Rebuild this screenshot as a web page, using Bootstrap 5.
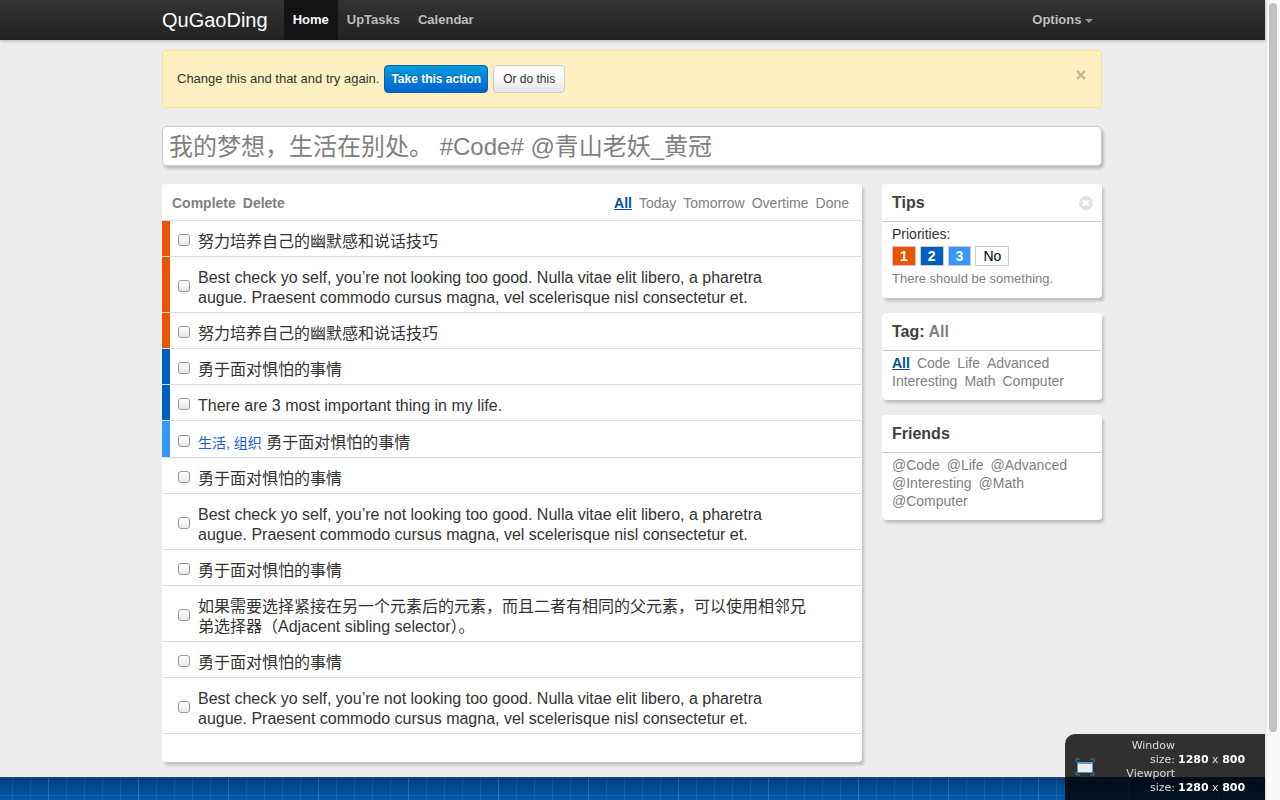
<!DOCTYPE html>
<html lang="zh-CN">
<head>
<meta charset="utf-8">
<meta name="viewport" content="width=device-width, initial-scale=1">
<title>QuGaoDing</title>
<link href="https://cdn.jsdelivr.net/npm/bootstrap@5.3.0/dist/css/bootstrap.min.css" rel="stylesheet">
<style>
  body { font-family: "Liberation Sans", "Noto Sans CJK SC", sans-serif; font-size: 13px; line-height: 18px; color: #333; background: #ededed; }
  a { color: #808080; text-decoration: none; }
  a:hover { color: #0050b0; }
  .wrap { width: 100%; max-width: 941px; margin: 0 auto; padding-right: 1px; }
  .page { min-width: 0; }

  .topbar { height: 40px; background: linear-gradient(#333, #222); box-shadow: 0 1px 3px rgba(0,0,0,.25), inset 0 -1px 0 rgba(0,0,0,.1); padding: 0; }
  .topbar .navbar-brand { font-size: 20px; line-height: 20px; color: #fff; padding: 0; margin: 0 16px 0 0; }
  .topbar .navbar-nav .nav-link { font-size: 13px; line-height: 20px; font-weight: bold; color: #bfbfbf; padding: 10px 9px; text-shadow: 0 -1px 0 rgba(0,0,0,.25); }
  .topbar .navbar-nav .nav-link.active { color: #fff; background: #131313; }
  .caret { display: inline-block; border: 4px solid transparent; border-top-color: #999; border-bottom: 0; vertical-align: middle; }

  .notice { gap: 5px; background: #fef0c0; border: 1px solid #fce08a; border-radius: 4px; padding: 14px; margin: 10px 0 18px; color: #333; }
  .notice .btn { font-size: 12px; line-height: 18px; padding: 4px 9px; border-radius: 4px; }
  .notice .btn-go { background: linear-gradient(#049cdb, #0064cd); border: 1px solid #0560b8; color: #fff; font-weight: bold; padding: 4px 6px; text-shadow: 0 -1px 0 rgba(0,0,0,.25); }
  .btn-alt { background: linear-gradient(#fff 25%, #e6e6e6); border: 1px solid #ccc; color: #333; }
  .dismiss { border: 0; background: none; padding: 0; color: #c5b891; line-height: 18px; }
  .dismiss svg, .hide-tips svg { display: block; }

  .panel { background: #fff; border-radius: 4px; box-shadow: 2px 3px 3px rgba(0,0,0,.2); }
  .new-task { height: 40px; border: 1px solid #ccc; border-radius: 5px; padding: 2px 6px 0; font-size: 24px; color: #808080; }
  .new-task::placeholder { color: #808080; opacity: 1; }

  .columns { gap: 20px; margin: 18px 0 15px; }
  .tools { font-size: 14px; line-height: 18px; padding: 10px 13px 8px 10px; border-bottom: 1px solid #ddd; }
  .tools button { border: 0; background: none; padding: 0; color: #808080; font-weight: bold; }
  .links { column-gap: 7px; font-size: 14px; line-height: 18px; }
  .links .current { color: #0050a8; font-weight: bold; text-decoration: underline; }

  .task { --level: #fff; border-bottom: 1px solid #ddd; background: linear-gradient(var(--level), var(--level)) 0 0 / 8px 100% no-repeat; padding-left: 16px; }
  .task label { font-size: 16px; line-height: 20px; padding: 11px 0 4px; width: 612px; max-width: 100%; }
  .p1 { --level: #eb5500; }
  .p2 { --level: #0060c0; }
  .p3 { --level: #3399ff; }
  .task.tagged { min-height: 37px; }
  .task .topic { font-size: 14px; color: #0f62cf; }
  .task input { appearance: none; flex: none; width: 12px; height: 12px; margin: 3px 8px 0 0; border: 1px solid #999; border-radius: 3px; background: linear-gradient(#fff, #e8e8e8); }
  .task input:checked { background: #0060c0; }
  .filler { height: 28px; }

  .side { flex: 0 0 220px; gap: 15px; }
  .side h2 { font-size: 16px; line-height: 18px; font-weight: bold; color: #404040; margin: 0; padding: 10px 9px 9px 10px; border-bottom: 1px solid #ccc; }
  .side .inner { padding: 3px 10px 10px; font-size: 14px; }
  .hide-tips { border: 0; background: none; padding: 0; }
  .levels { margin: 3px 0 4px; }
  .level { border: 1px solid #ccc; color: #fff; height: 20px; line-height: 18px; padding: 0 7px; font-size: 14px; }
  .level.l1 { background: #eb5500; }
  .level.l2 { background: #0060c0; }
  .level.l3 { background: #3399ff; }
  .level.l0 { background: #fff; color: #000; }
  .hint { font-size: 13px; color: #808080; }

  .blueprint { min-height: 23px; border-top: 1px solid #234a76;
    background:
      repeating-linear-gradient(90deg, transparent 0 48px, rgba(255,255,255,.1) 48px 49px, transparent 49px 90px),
      repeating-linear-gradient(90deg, transparent 0 12px, rgba(255,255,255,.08) 12px 13px, transparent 13px 18px),
      linear-gradient(transparent 17px, rgba(255,255,255,.08) 17px 18px, transparent 18px),
      linear-gradient(#003f80, #005ba8 22px); }

  .gutter { flex: 0 0 15px; background: linear-gradient(90deg, #e4e4e4, #fafafa 3px); padding: 3px 3px 0 4px; }
  .thumb { height: 729px; border-radius: 4px; background: #c1c1c1; }

  .sizes { position: fixed; right: 15px; bottom: 0; width: 200px; padding: 5px 17px 5px 10px; background: rgba(0,0,0,.8); border-top-left-radius: 10px; color: #ddd; font: 11px/14px "DejaVu Sans", sans-serif; }
  .sizes dt { font-weight: normal; width: 52px; text-align: right; }
  .sizes dd { margin: 14px 0 0 3px; width: 70px; white-space: nowrap; }
  .sizes b { color: #fff; }
</style>
</head>
<body>
<div class="d-flex min-vh-100">
  <div class="page d-flex flex-column flex-grow-1">
    <nav class="navbar navbar-expand topbar">
      <div class="wrap d-flex align-items-center">
        <a class="navbar-brand" href="#">QuGaoDing</a>
        <ul class="navbar-nav flex-grow-1">
          <li class="nav-item"><a class="nav-link active" href="#">Home</a></li>
          <li class="nav-item"><a class="nav-link" href="#">UpTasks</a></li>
          <li class="nav-item"><a class="nav-link" href="#">Calendar</a></li>
          <li class="nav-item ms-auto"><a class="nav-link" href="#">Options <span class="caret"></span></a></li>
        </ul>
      </div>
    </nav>

    <main class="wrap">
      <div class="notice d-flex align-items-center" role="alert">
        <span>Change this and that and try again.</span>
        <button type="button" class="btn btn-go">Take this action</button>
        <button type="button" class="btn btn-alt">Or do this</button>
        <button type="button" class="dismiss ms-auto mb-2" aria-label="Close"><svg width="12" height="10" viewBox="0 0 12 10"><path d="M2 1l8 8M10 1L2 9" stroke="currentColor" stroke-width="2.4"/></svg></button>
      </div>

      <input type="text" class="new-task panel w-100 d-block" aria-label="New task" placeholder="我的梦想，生活在别处。 #Code# @青山老妖_黄冠">

      <div class="columns d-flex align-items-start">
        <section class="panel flex-grow-1">
          <div class="tools d-flex justify-content-between">
            <div class="links d-flex"><button type="button">Complete</button><button type="button">Delete</button></div>
            <div class="links d-flex"><a class="current" href="#">All</a><a href="#">Today</a><a href="#">Tomorrow</a><a href="#">Overtime</a><a href="#">Done</a></div>
          </div>
          <div class="task p1 d-flex align-items-center"><input type="checkbox" id="t1"><label for="t1">努力培养自己的幽默感和说话技巧</label></div>
          <div class="task p1 d-flex align-items-center"><input type="checkbox" id="t2"><label for="t2">Best check yo self, you’re not looking too good. Nulla vitae elit libero, a pharetra augue. Praesent commodo cursus magna, vel scelerisque nisl consectetur et.</label></div>
          <div class="task p1 d-flex align-items-center"><input type="checkbox" id="t3"><label for="t3">努力培养自己的幽默感和说话技巧</label></div>
          <div class="task p2 d-flex align-items-center"><input type="checkbox" id="t4"><label for="t4">勇于面对惧怕的事情</label></div>
          <div class="task p2 d-flex align-items-center"><input type="checkbox" id="t5"><label for="t5">There are 3 most important thing in my life.</label></div>
          <div class="task p3 tagged d-flex align-items-center"><input type="checkbox" id="t6"><label for="t6"><a class="topic" href="#">生活</a><span class="topic">, </span><a class="topic" href="#">组织</a> 勇于面对惧怕的事情</label></div>
          <div class="task d-flex align-items-center"><input type="checkbox" id="t7"><label for="t7">勇于面对惧怕的事情</label></div>
          <div class="task d-flex align-items-center"><input type="checkbox" id="t8"><label for="t8">Best check yo self, you’re not looking too good. Nulla vitae elit libero, a pharetra augue. Praesent commodo cursus magna, vel scelerisque nisl consectetur et.</label></div>
          <div class="task d-flex align-items-center"><input type="checkbox" id="t9"><label for="t9">勇于面对惧怕的事情</label></div>
          <div class="task d-flex align-items-center"><input type="checkbox" id="t10"><label for="t10">如果需要选择紧接在另一个元素后的元素，而且二者有相同的父元素，可以使用相邻兄弟选择器（Adjacent sibling selector）。</label></div>
          <div class="task d-flex align-items-center"><input type="checkbox" id="t11"><label for="t11">勇于面对惧怕的事情</label></div>
          <div class="task d-flex align-items-center"><input type="checkbox" id="t12"><label for="t12">Best check yo self, you’re not looking too good. Nulla vitae elit libero, a pharetra augue. Praesent commodo cursus magna, vel scelerisque nisl consectetur et.</label></div>
          <div class="filler"></div>
        </section>

        <aside class="side d-flex flex-column">
          <section class="panel">
            <h2 class="d-flex justify-content-between align-items-center">Tips <button type="button" class="hide-tips" aria-label="Hide tips"><svg width="14" height="14" viewBox="0 0 14 14"><circle cx="7" cy="7" r="7" fill="#e3e3e3"/><path d="M4.3 4.3l5.4 5.4M9.7 4.3L4.3 9.7" stroke="#fff" stroke-width="2.4"/></svg></button></h2>
            <div class="inner">
              <div>Priorities:</div>
              <div class="levels d-flex gap-1"><span class="level l1 fw-bold">1</span><span class="level l2 fw-bold">2</span><span class="level l3 fw-bold">3</span><span class="level l0">No</span></div>
              <div class="hint">There should be something.</div>
            </div>
          </section>
          <section class="panel">
            <h2>Tag: <a href="#">All</a></h2>
            <div class="inner links d-flex flex-wrap"><a class="current" href="#">All</a><a href="#">Code</a><a href="#">Life</a><a href="#">Advanced</a><a href="#">Interesting</a><a href="#">Math</a><a href="#">Computer</a></div>
          </section>
          <section class="panel">
            <h2>Friends</h2>
            <div class="inner links d-flex flex-wrap"><a href="#">@Code</a><a href="#">@Life</a><a href="#">@Advanced</a><a href="#">@Interesting</a><a href="#">@Math</a><a href="#">@Computer</a></div>
          </section>
        </aside>
      </div>
    </main>

    <footer class="blueprint flex-grow-1"></footer>
  </div>
  <div class="gutter"><div class="thumb"></div></div>
</div>

<div class="sizes d-flex align-items-center">
  <svg class="me-auto" width="20" height="18" viewBox="0 0 20 18"><path d="M1 4V1h4M15 1h4v3M1 14v3h4M15 17h4v-3" fill="none" stroke="#3d7eae"/><rect x="2.5" y="4.5" width="15" height="10" fill="#eee" stroke="#4b94cc"/><path d="M2 4h16v2H2z" fill="#5a9fd2"/></svg>
  <dl class="m-0">
    <div class="d-flex"><dt>Window size:</dt><dd><b>1280</b> x <b>800</b></dd></div>
    <div class="d-flex"><dt>Viewport size:</dt><dd><b>1280</b> x <b>800</b></dd></div>
  </dl>
</div>
<script src="https://cdn.jsdelivr.net/npm/bootstrap@5.3.0/dist/js/bootstrap.bundle.min.js"></script>
</body>
</html>
